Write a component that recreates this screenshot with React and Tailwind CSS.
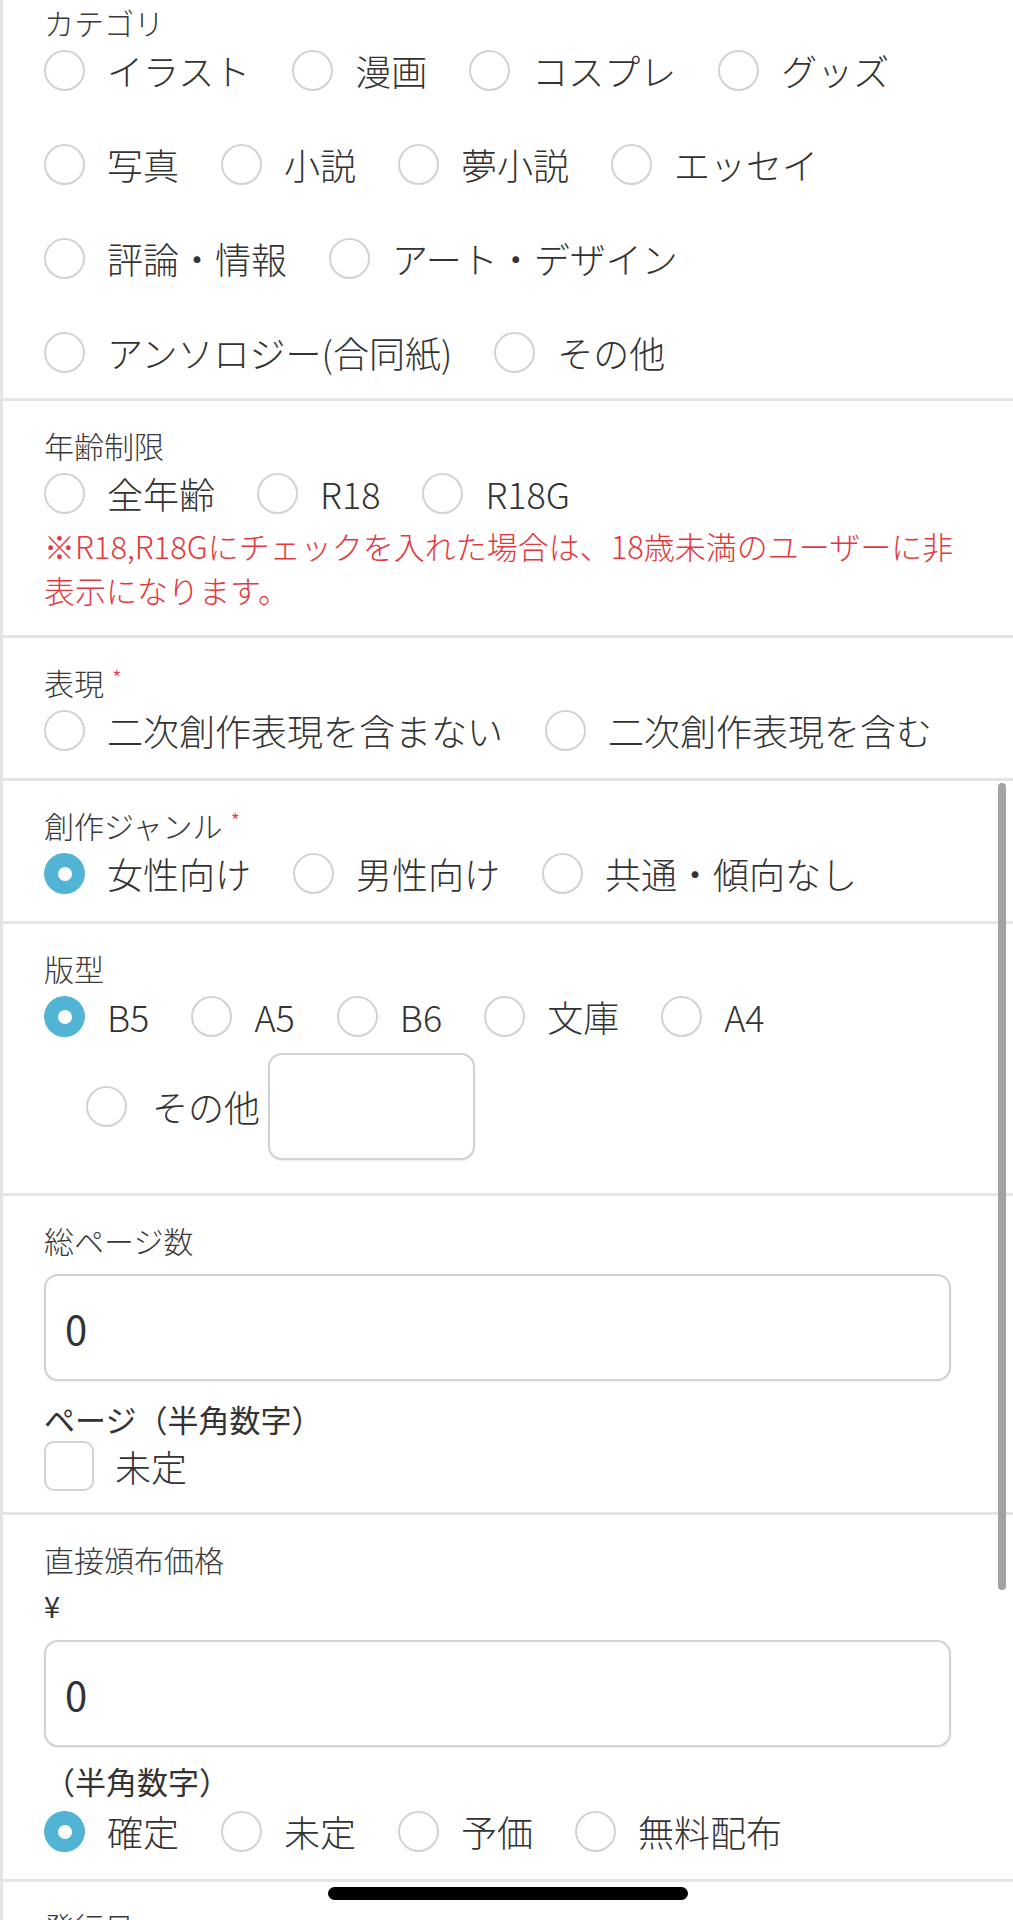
const font = "font-['Noto_Sans_CJK_JP','Noto_Sans',sans-serif]";

const categoryRows = [
  ["イラスト", "漫画", "コスプレ", "グッズ"],
  ["写真", "小説", "夢小説", "エッセイ"],
  ["評論・情報", "アート・デザイン"],
  ["アンソロジー(合同紙)", "その他"],
];

function Radio({ checked }) {
  if (checked) {
    return (
      <span className="flex h-[41px] w-[41px] shrink-0 items-center justify-center rounded-full bg-[#52b4d4]">
        <span className="h-[14px] w-[14px] rounded-full bg-white" />
      </span>
    );
  }
  return <span className="h-[41px] w-[41px] shrink-0 rounded-full border-2 border-[#d2d2d2] bg-white" />;
}

function Option({ label, checked }) {
  return (
    <div className="mr-[42px] flex h-[41px] items-center">
      <Radio checked={checked} />
      <span className="ml-[22px] whitespace-nowrap text-[36px] font-light leading-[41px] text-[#333]">{label}</span>
    </div>
  );
}

function Row({ items, checked, className = "" }) {
  return (
    <div className={`flex h-[41px] items-center ${className}`}>
      {items.map((item) => (
        <Option key={item} label={item} checked={item === checked} />
      ))}
    </div>
  );
}

function Label({ children, required }) {
  return (
    <div className="flex h-[40px] items-center text-[30px] font-light leading-[40px] text-[#3a3a3a]">
      {children}
      {required && (
        <span className="ml-[8px] mt-[4px] self-start text-[22px] leading-none text-[#e3393c]">*</span>
      )}
    </div>
  );
}

function Section({ className = "", children }) {
  return <div className={`border-b-[3px] border-[#e5e5e5] pl-[41px] pr-[38px] ${className}`}>{children}</div>;
}

function NumberBox({ className = "" }) {
  return (
    <div
      className={`flex h-[107px] w-[907px] items-center rounded-[14px] border-2 border-[#d2d2d2] bg-white pl-[19px] text-[40px] leading-none text-[#333] shadow-[0_1px_2px_rgba(0,0,0,0.08)] ${className}`}
    >
      0
    </div>
  );
}

export default function App() {
  return (
    <div className={`relative h-[1920px] w-full overflow-hidden border-l-[3px] border-[#e5e5e5] bg-white ${font}`}>
      {/* カテゴリ */}
      <Section className="pt-[2px] pb-[25px]">
        <Label>カテゴリ</Label>
        <div className="mt-[8px] flex flex-col gap-[53px]">
          {categoryRows.map((row, i) => (
            <Row key={i} items={row} />
          ))}
        </div>
      </Section>

      {/* 年齢制限 */}
      <Section className="pt-[24px] pb-[23px]">
        <Label>年齢制限</Label>
        <Row className="mt-[8px]" items={["全年齢", "R18", "R18G"]} />
        <p className="mt-[10px] text-[31px] font-light leading-[44px] text-[#e3393c]">
          ※R18,R18Gにチェックを入れた場合は、18歳未満のユーザーに非表示になります。
        </p>
      </Section>

      {/* 表現 */}
      <Section className="pt-[24px] pb-[27px]">
        <Label required>表現</Label>
        <Row className="mt-[8px]" items={["二次創作表現を含まない", "二次創作表現を含む"]} />
      </Section>

      {/* 創作ジャンル */}
      <Section className="pt-[24px] pb-[27px]">
        <Label required>創作ジャンル</Label>
        <Row className="mt-[8px]" items={["女性向け", "男性向け", "共通・傾向なし"]} checked="女性向け" />
      </Section>

      {/* 版型 */}
      <Section className="pt-[24px] pb-[33px]">
        <Label>版型</Label>
        <Row className="mt-[8px]" items={["B5", "A5", "B6", "文庫", "A4"]} checked="B5" />
        <div className="ml-[42px] mt-[16px] flex items-center">
          <Radio />
          <span className="ml-[25px] whitespace-nowrap text-[36px] font-light leading-[41px] text-[#333]">その他</span>
          <div className="ml-[8px] h-[107px] w-[207px] rounded-[14px] border-2 border-[#d2d2d2] bg-white shadow-[0_1px_2px_rgba(0,0,0,0.08)]" />
        </div>
      </Section>

      {/* 総ページ数 */}
      <Section className="pt-[24px] pb-[21px]">
        <Label>総ページ数</Label>
        <NumberBox className="mt-[14px]" />
        <div className="mt-[20px] text-[31px] leading-[36px] text-[#333]">ページ（半角数字）</div>
        <div className="mt-[4px] flex h-[50px] items-center">
          <span className="h-[50px] w-[50px] rounded-[10px] border-2 border-[#d2d2d2] bg-white" />
          <span className="ml-[21px] text-[36px] font-light leading-[41px] text-[#333]">未定</span>
        </div>
      </Section>

      {/* 直接頒布価格 */}
      <Section className="pt-[24px] pb-[27px]">
        <Label>直接頒布価格</Label>
        <div className="mt-[8px] text-[29px] leading-[36px] text-[#333]">¥</div>
        <NumberBox className="mt-[17px]" />
        <div className="mt-[16px] text-[31px] leading-[36px] text-[#333]">（半角数字）</div>
        <Row className="mt-[12px]" items={["確定", "未定", "予価", "無料配布"]} checked="確定" />
      </Section>

      {/* 発行日 */}
      <Section className="pt-[24px] pb-[27px]">
        <Label>発行日</Label>
      </Section>

      {/* scroll indicator */}
      <div className="absolute right-[7px] top-[783px] h-[807px] w-[8px] rounded-full bg-[#a3a3a3]" />
      {/* home indicator */}
      <div className="absolute left-1/2 top-[1887px] h-[13px] w-[360px] -translate-x-1/2 rounded-full bg-black" />
    </div>
  );
}
